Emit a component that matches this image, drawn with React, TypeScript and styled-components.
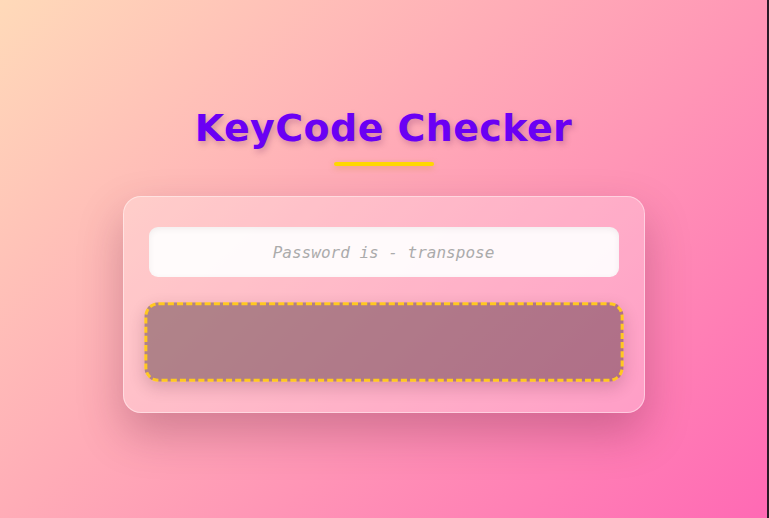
import React from "react";
import styled, { createGlobalStyle } from "styled-components";

const Global = createGlobalStyle`
  html, body { margin: 0; padding: 0; height: 100%; background: #2b1a28; }
  #root { height: 100%; }
`;

const Page = styled.main`
  width: calc(100% - 2px);
  height: 100%;
  background: linear-gradient(135deg, #ffdab9 0%, #ff69b4 100%);
  display: flex;
  flex-direction: column;
  align-items: center;
  padding-top: 104px;
  box-sizing: border-box;
  font-family: "DejaVu Sans", sans-serif;
`;

const Title = styled.h1`
  margin: 0;
  font-family: "DejaVu Sans", sans-serif;
  font-weight: 700;
  font-size: 38px;
  line-height: 48px;
  letter-spacing: 0.4px;
  color: #6a00f4;
  text-shadow: 2px 3px 6px rgba(80, 0, 80, 0.25);
`;

const Underline = styled.div`
  width: 100px;
  height: 4px;
  border-radius: 2px;
  background: #ffd700;
  margin-top: 10px;
  box-shadow: 0 2px 6px rgba(200, 140, 0, 0.35);
`;

const Card = styled.section`
  margin-top: 30px;
  width: 522px;
  box-sizing: border-box;
  padding: 30px 25px 31px;
  display: flex;
  flex-direction: column;
  gap: 26px;
  border-radius: 18px;
  background: rgba(255, 255, 255, 0.25);
  border: 1px solid rgba(255, 255, 255, 0.45);
  box-shadow: 0 20px 45px rgba(90, 20, 50, 0.28);
`;

const Input = styled.input`
  height: 50px;
  width: 100%;
  box-sizing: border-box;
  border: none;
  outline: none;
  border-radius: 9px;
  background: rgba(255, 255, 255, 0.92);
  box-shadow: inset 0 2px 6px rgba(0, 0, 0, 0.06);
  text-align: center;
  font-family: "DejaVu Sans Mono", "Liberation Mono", monospace;
  font-style: italic;
  font-size: 16px;
  color: #555;
  &::placeholder { color: #ababab; }
`;

const Display = styled.div`
  height: 78px;
  box-sizing: border-box;
  border: 3px dashed #ffc820;
  border-radius: 14px;
  background: rgba(58, 34, 42, 0.4);
  transform: scale(1.02);
  box-shadow: 0 6px 16px rgba(60, 20, 40, 0.18);
`;

export default function App() {
  return (
    <>
      <Global />
      <Page>
        <Title>KeyCode Checker</Title>
        <Underline />
        <Card>
          <Input placeholder="Password is - transpose" />
          <Display />
        </Card>
      </Page>
    </>
  );
}
